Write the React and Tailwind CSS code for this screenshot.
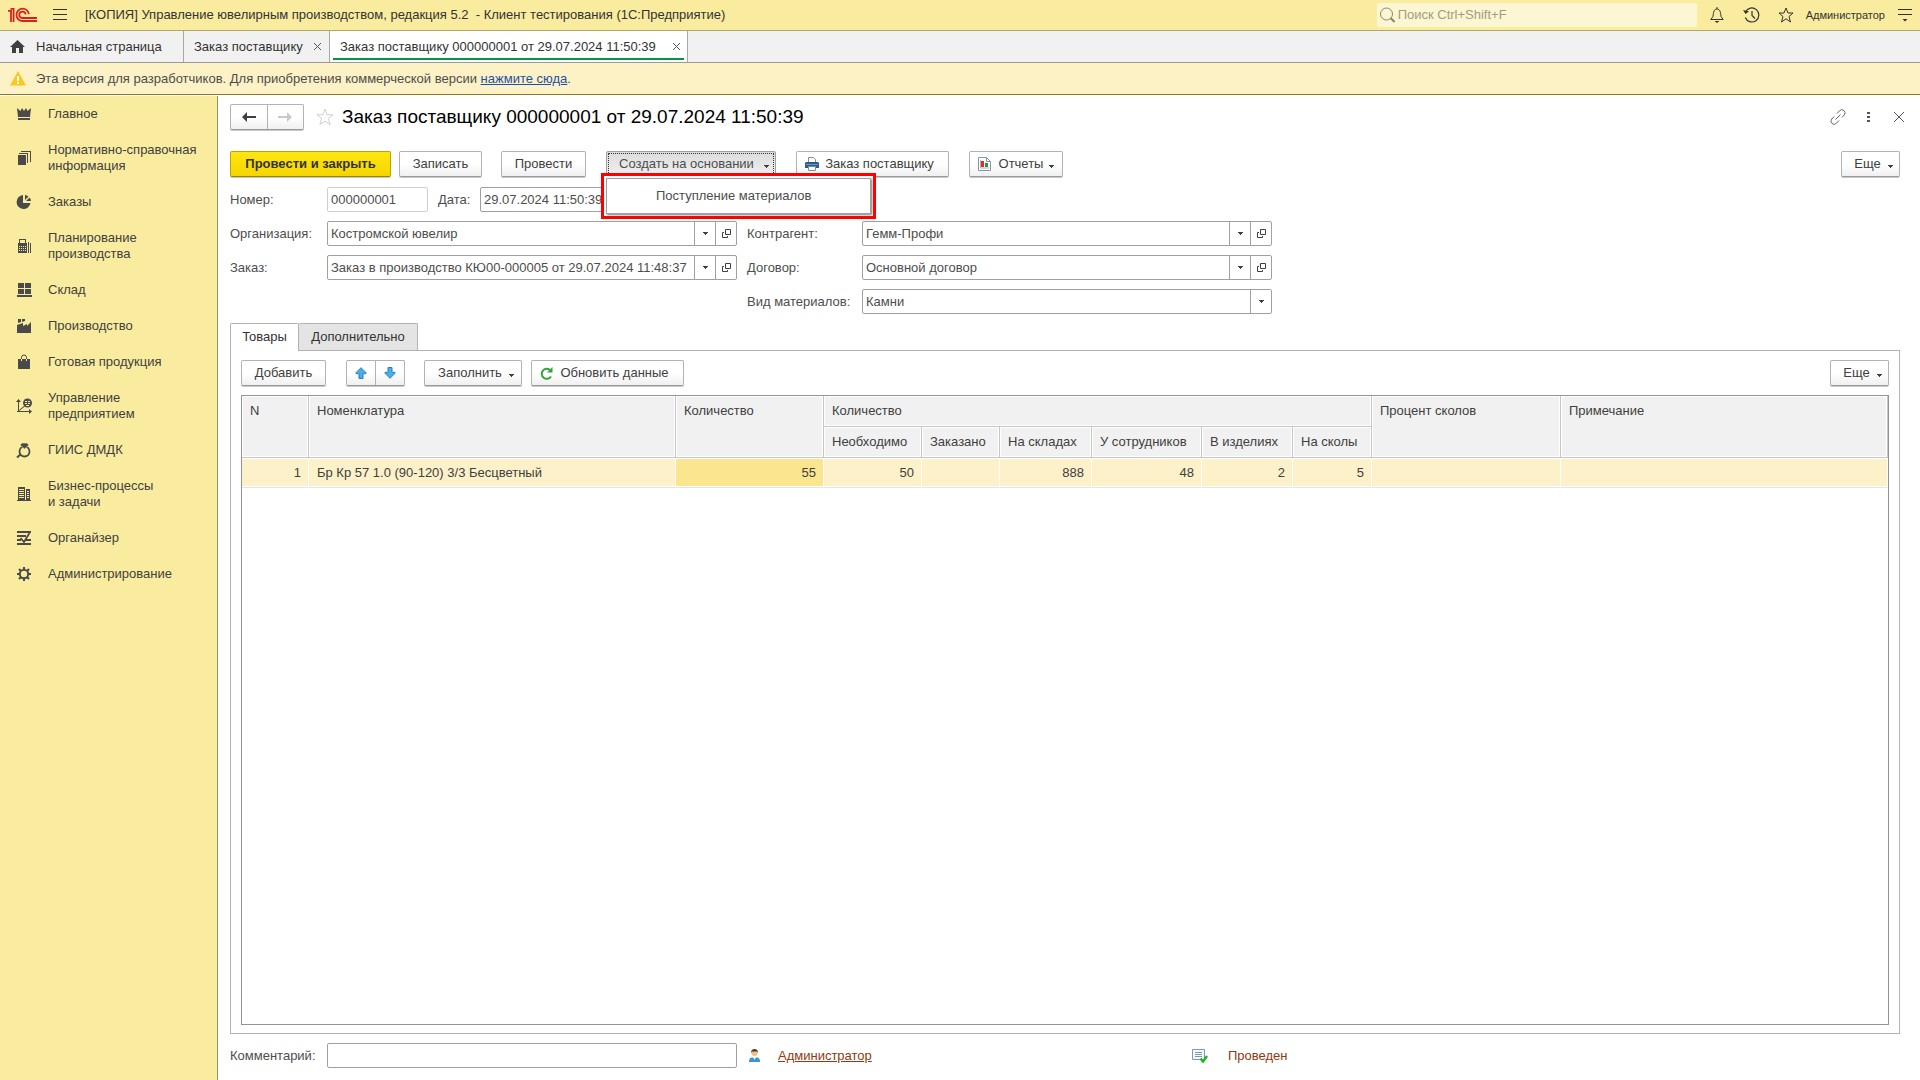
import React from "react";

const Caret = ({ className = "" }) => (
  <svg className={"shrink-0 " + className} width="5" height="3" viewBox="0 0 5 3" fill="#404040" aria-hidden="true">
    <path d="M0 0h5v1H4v1H3v1H2V2H1V1H0z" />
  </svg>
);

const BTN =
  "flex h-[26px] shrink-0 items-center justify-center rounded-[2px] border border-[#b2b2b2] border-b-[#9a9a9a] bg-gradient-to-b from-white from-50% to-[#f0f0f0] text-[#404040] shadow-[0_1px_0_#c8c8c8]";

function Icon({ children, size = 16 }) {
  return (
    <svg width={size} height={size} viewBox={`0 0 ${size} ${size}`} fill="#4a4a4a" className="shrink-0" aria-hidden="true">
      {children}
    </svg>
  );
}

const sections = [
  {
    label: ["Главное"],
    icon: <path d="M1 2l3.500 3L6 2l2 3 2-3 1.500 3L15 2l-1 9H2zM2 12h12v2H2z" />,
  },
  {
    label: ["Нормативно-справочная", "информация"],
    icon: <path d="M2 5h8v10H2zM3 3h9v10h-1V4H3zM5 1h10v11h-1V2H5z" />,
  },
  {
    label: ["Заказы"],
    icon: <path d="M7 1v8h7.500A7 7 0 1 1 7 1zM9 1a6.500 6.500 0 0 1 3.500 1.500L9 6zM10 7l3.500-3.500A6 6 0 0 1 15 7z" />,
  },
  {
    label: ["Планирование", "производства"],
    icon: (
      <>
        <path d="M3 1h7v4h1v10H2V5h1zM4 2v3h5V2zM12 4h1v11h-1zM14 5h1v10h-1z" fillRule="evenodd" />
        <path d="M3 8h1v1H3zM5 8h1v1H5zM7 8h1v1H7zM9 8h1v1H9zM3 10h1v1H3zM5 10h1v1H5zM7 10h1v1H7zM9 10h1v1H9zM3 12h1v1H3zM5 12h1v1H5zM7 12h1v1H7zM9 12h1v1H9z" fill="#faec9f" />
      </>
    ),
  },
  {
    label: ["Склад"],
    icon: <path d="M2 1h6v5H2zM9 1h6v5H9zM2 7h6v5H2zM9 7h6v5H9zM1 13h15v2H1z" />,
  },
  {
    label: ["Производство"],
    icon: <path d="M2 1h3v3l-3 1zM6 1h3v2L6 4zM1 7l6-2v3l4-2v2l4-4v11H1z" />,
  },
  {
    label: ["Готовая продукция"],
    icon: (
      <>
        <path d="M2 5h12v10H2z" />
        <path d="M5.500 5V3.500a2.500 2.500 0 0 1 5 0V5" fill="none" stroke="#4a4a4a" />
        <path d="M5.500 7V5M10.500 7V5" stroke="#faec9f" />
      </>
    ),
  },
  {
    label: ["Управление", "предприятием"],
    icon: (
      <>
        <path d="M2 4h1v10H2zM1 13h13v1H1zM0 4l2.500-3L5 4zM13 11l3 2.500-3 2.500zM3 12l5-4 .600 .800L3 13z" />
        <circle cx="11.500" cy="5" r="4.500" />
        <path d="M9 3h2v1H9zM12 3h2v1h-2zM9 5h2v1H9zM12 5h2v1h-2zM10 7h3v1h-3z" fill="#faec9f" />
      </>
    ),
  },
  {
    label: ["ГИИС ДМДК"],
    icon: (
      <>
        <circle cx="8.500" cy="9.500" r="5" fill="none" stroke="#4a4a4a" strokeWidth="1.800" />
        <path d="M6 1h5l2 2-4.500 4L4 3z" stroke="#faec9f" strokeWidth=".6" />
        <path d="M5 12l-4 3.500" stroke="#4a4a4a" strokeWidth="2" />
      </>
    ),
  },
  {
    label: ["Бизнес-процессы", "и задачи"],
    icon: (
      <path
        d="M2 1h7v13H2zM10 3h4v11h-4zM1 14h14v1H1zM3 3v1h5V3zM3 5v1h5V5zM3 7v1h5V7zM3 9v1h5V9zM3 11v1h5v-1zM11 5v1h2V5zM11 7v1h2V7zM11 9v1h2V9zM11 11v1h2v-1z"
        fillRule="evenodd"
      />
    ),
  },
  {
    label: ["Органайзер"],
    icon: (
      <>
        <path d="M1 1h14v2H1zM1 5h9v2H1zM1 9h4v2H1zM9 9h6v2H9zM1 13h14v2H1z" />
        <path d="M4.500 8l3.500 4 5.500-9" fill="none" stroke="#4a4a4a" strokeWidth="1.800" />
      </>
    ),
  },
  {
    label: ["Администрирование"],
    icon: (
      <>
        <circle cx="8" cy="8" r="4.200" fill="none" stroke="#4a4a4a" strokeWidth="2" />
        <path
          d="M8 1v3M8 12v3M1 8h3M12 8h3M3 3l2.200 2.200M10.800 10.800L13 13M3 13l2.200-2.200M10.800 5.200L13 3"
          stroke="#4a4a4a"
          strokeWidth="2"
        />
      </>
    ),
  },
];

function Logo() {
  return (
    <svg width="30" height="16" viewBox="0 0 30 16" fill="none" stroke="#d9201f" strokeWidth="1.800" role="img" aria-label="1С">
      <path d="M0 3.900h3V15M2.500 1.900h3.100V15" />
      <path d="M20.800 7.200A6.200 6.200 0 1 0 14.600 14H29" />
      <path d="M17.600 7.500A3.200 3.200 0 1 0 14.600 11H29" />
    </svg>
  );
}

function TopBar() {
  return (
    <header className="flex h-[31px] items-center border-b border-[#b3a86a] bg-[#faec9f] px-2">
      <Logo />
      <button type="button" aria-label="Меню" className="ml-[15px]">
        <svg width="14" height="12" viewBox="0 0 14 12" fill="#333">
          <path d="M0 0h14v1H0zM0 5h14v1H0zM0 10h14v1H0z" />
        </svg>
      </button>
      <h1 className="ml-[18px] flex-1 whitespace-pre text-[13px] text-[#333]">
        [КОПИЯ] Управление ювелирным производством, редакция 5.2{"  "}- Клиент тестирования (1С:Предприятие)
      </h1>
      <label className="flex h-6 w-[320px] items-center gap-[3px] rounded-[2px] bg-[#fdf6d3] pl-[3px]">
        <svg width="15" height="16" viewBox="0 0 15 16" fill="none" stroke="#8c8665" aria-hidden="true">
          <circle cx="6.500" cy="7" r="6" />
          <path d="M10.500 11l4 4" strokeWidth="2" />
        </svg>
        <input
          aria-label="Поиск"
          placeholder="Поиск Ctrl+Shift+F"
          className="min-w-0 flex-1 bg-transparent text-[13px] outline-none placeholder:text-[#a29c80]"
        />
      </label>
      <button type="button" aria-label="Уведомления" className="ml-[13px]">
        <svg width="14" height="16" viewBox="0 0 14 16" fill="none" stroke="#333">
          <path d="M7 0v2M3 9.500C3.500 5 4 2 7 2s3.500 3 4 7.500l2.200 3H.8z" />
          <path d="M4.500 14h5L7 16z" fill="#333" stroke="none" />
        </svg>
      </button>
      <button type="button" aria-label="История" className="ml-[19px]">
        <svg width="17" height="16" viewBox="0 0 17 16" fill="none" stroke="#333">
          <path d="M2.500 5A7 7 0 1 1 2.300 10.500" strokeWidth="1.200" />
          <path d="M0 3l2.500 4L6 4.500z" fill="#333" stroke="none" />
          <path d="M9 4v4.500l3 3" strokeWidth="1.200" />
        </svg>
      </button>
      <button type="button" aria-label="Избранное" className="ml-[18px]">
        <svg width="16" height="16" viewBox="0 0 16 16" fill="none" stroke="#333">
          <path d="M8 1l2 5h5l-4 3.500 1.500 5.500L8 11.800 3.500 15 5 9.500 1 6h5z" />
        </svg>
      </button>
      <span className="ml-3 text-[11px] text-[#333]">Администратор</span>
      <button type="button" aria-label="Сервис" className="ml-[13px]">
        <svg width="14" height="14" viewBox="0 0 14 14" fill="#333">
          <path d="M0 1h14v1H0zM0 6h14v1H0zM4.500 11h5L7 13.500z" />
        </svg>
      </button>
    </header>
  );
}

const CloseX = () => (
  <svg width="7" height="7" viewBox="0 0 7 7" stroke="#555" aria-hidden="true">
    <path d="M0 0l7 7M7 0L0 7" />
  </svg>
);

function WindowTabs() {
  return (
    <nav className="flex h-8 border-b border-[#9a9a9a] bg-[#f1f1f1] text-[13px] text-[#333]">
      <a href="#home" className="flex w-[184px] items-center gap-[11px] border-r border-[#a8a8a8] pl-[10px]">
        <svg width="15" height="13" viewBox="0 0 15 13" fill="#404040" aria-hidden="true">
          <path d="M7.500 0L15 7h-2v6H9V8H6v5H2V7H0z" />
        </svg>
        Начальная страница
      </a>
      <div className="flex w-[146px] items-center justify-between border-r border-[#a8a8a8] pl-[10px] pr-2">
        <a href="#orders">Заказ поставщику</a>
        <button type="button" aria-label="Закрыть вкладку">
          <CloseX />
        </button>
      </div>
      <div className="flex border-r border-[#a8a8a8] bg-white px-[3px] pb-[2px]">
        <div className="flex w-[351px] items-center justify-between border-b-2 border-[#009646] pl-[7px] pr-1 pt-1">
          <a href="#order">Заказ поставщику 000000001 от 29.07.2024 11:50:39</a>
          <button type="button" aria-label="Закрыть вкладку">
            <CloseX />
          </button>
        </div>
      </div>
    </nav>
  );
}

function Notice() {
  return (
    <div className="flex h-8 items-center border-b border-[#8f7c22] bg-[#fdf1c6] pl-[10px] text-[13px] text-[#4d4d4d]">
      <svg width="16" height="15" viewBox="0 0 16 15" aria-hidden="true">
        <path d="M8 0l8 14.500H0z" fill="#fbc81e" />
        <path d="M7 5h2v5H7zM7 11h2v2H7z" fill="#fff" />
      </svg>
      <p className="ml-[10px]">
        Эта версия для разработчиков. Для приобретения коммерческой версии{" "}
        <a href="#buy" className="text-[#1e50a8] underline">
          нажмите сюда
        </a>
        .
      </p>
    </div>
  );
}

function Sidebar() {
  return (
    <nav className="w-[218px] shrink-0 border-r border-[#9b9264] bg-[#faec9f] text-[13px] leading-4 text-[#404040]">
      {sections.map((s) => (
        <a key={s.label[0]} href="#section" className="flex items-center gap-4 py-[10px] pl-4">
          <Icon>{s.icon}</Icon>
          <span>
            {s.label.map((line) => (
              <span key={line} className="block whitespace-nowrap">
                {line}
              </span>
            ))}
          </span>
        </a>
      ))}
    </nav>
  );
}

function Field({ id, label, value, labelClass, open = true }) {
  return (
    <div className="flex items-center">
      <label htmlFor={id} className={"shrink-0 " + labelClass}>
        {label}
      </label>
      <div className="flex h-[25px] w-[410px] overflow-hidden rounded-[2px] border border-[#a0a0a0] bg-white">
        {open ? (
          <>
            <input id={id} defaultValue={value} className="min-w-0 flex-1 pl-[3px] outline-none" />
            <button type="button" aria-label={"Выбрать: " + label} className="flex w-[21px] items-center justify-center border-l border-[#a0a0a0]">
              <Caret />
            </button>
            <button type="button" aria-label={"Открыть: " + label} className="flex w-[21px] items-center justify-center border-l border-[#a0a0a0]">
              <svg width="9" height="9" viewBox="0 0 9 9" fill="none" stroke="#404040" aria-hidden="true">
                <path d="M3.500 .5h5v5h-5zM2 3.500H.5v5h5V7" />
              </svg>
            </button>
          </>
        ) : (
          <>
            <select id={id} defaultValue={value} className="min-w-0 flex-1 appearance-none pl-[3px] outline-none">
              <option>{value}</option>
            </select>
            <span className="flex w-[21px] items-center justify-center border-l border-[#a0a0a0]">
              <Caret />
            </span>
          </>
        )}
      </div>
    </div>
  );
}

function TitleRow() {
  return (
    <div className="flex items-center pt-2">
      <div className={BTN + " w-[74px]"}>
        <button type="button" aria-label="Назад" className="flex h-full flex-1 items-center justify-center border-r border-[#b2b2b2]">
          <svg width="14" height="10" viewBox="0 0 14 10" fill="#404040">
            <path d="M5 0v4h9v2H5v4L0 5z" />
          </svg>
        </button>
        <button type="button" aria-label="Вперед" className="flex h-full flex-1 items-center justify-center">
          <svg width="14" height="10" viewBox="0 0 14 10" fill="#c9c9c9">
            <path d="M9 0v4H0v2h9v4l5-5z" />
          </svg>
        </button>
      </div>
      <button type="button" aria-label="В избранное" className="ml-3">
        <svg width="18" height="18" viewBox="0 0 18 18" fill="none" stroke="#d0d0d0">
          <path d="M9 1l2.200 5.800H17l-4.700 3.700 1.800 6L9 13.200l-5.100 3.300 1.800-6L1 6.800h5.800z" />
        </svg>
      </button>
      <h2 className="ml-2 flex-1 text-[19px] leading-6 text-black">Заказ поставщику 000000001 от 29.07.2024 11:50:39</h2>
      <button type="button" aria-label="Ссылка">
        <svg width="16" height="16" viewBox="0 0 16 16" fill="none" stroke="#666">
          <path d="M7 4.500l2.500-2.700a3 3 0 0 1 4.700 4.200L12 8.500M9 11.500l-2.500 2.700A3 3 0 0 1 1.800 10L4 7.500M5.500 10.500l5-5" />
        </svg>
      </button>
      <button type="button" aria-label="Действия" className="ml-[21px]">
        <svg width="3" height="11" viewBox="0 0 3 11" fill="#555">
          <path d="M0 0h3v2H0zM0 4h3v2H0zM0 8h3v2H0z" />
        </svg>
      </button>
      <button type="button" aria-label="Закрыть" className="-mr-1 ml-6">
        <svg width="10" height="10" viewBox="0 0 10 10" stroke="#555">
          <path d="M0 0l10 10M10 0L0 10" />
        </svg>
      </button>
    </div>
  );
}

function CommandBar() {
  return (
    <div className="mt-[21px] flex">
      <button
        type="button"
        className="flex h-[26px] w-[161px] items-center justify-center rounded-[2px] border border-[#bda200] border-b-[#9c8600] bg-gradient-to-b from-[#ffe60f] to-[#f5d500] font-bold text-[#333] shadow-[0_1px_0_#c8c8c8]"
      >
        Провести и закрыть
      </button>
      <button type="button" className={BTN + " ml-2 w-[83px]"}>
        Записать
      </button>
      <button type="button" className={BTN + " ml-[19px] w-[85px]"}>
        Провести
      </button>
      <div className="relative ml-5 w-[170px]">
        <button
          type="button"
          aria-expanded="true"
          className="flex h-[26px] w-full rounded-[2px] border border-[#a0a0a0] bg-gradient-to-b from-[#dcdcdc] to-[#f0f0f0] p-px"
        >
          <span className="flex h-full w-full items-center justify-between border border-dotted border-[#333] pl-[10px] pr-1">
            Создать на основании
            <Caret className="mt-1" />
          </span>
        </button>
        <div className="absolute -left-[5px] top-[22px] z-10 w-[275px] border-[3px] border-[#fe0000] bg-white p-[2px]" role="menu">
          <button
            type="button"
            role="menuitem"
            className="flex h-9 w-full items-center justify-start border border-[#a0a0a0] pl-[49px] shadow-[1px_1px_2px_#777]"
          >
            Поступление материалов
          </button>
        </div>
      </div>
      <button type="button" className={BTN + " ml-5 w-[153px] gap-[6px] pr-[6px]"}>
        <svg width="14" height="14" viewBox="0 0 14 14" aria-hidden="true">
          <path d="M3.500 5V.5h5l2 2V5" fill="#fff" stroke="#7890a4" />
          <path d="M1 5h12l1 1v5H0V6z" fill="#2d5c86" />
          <path d="M1 7h12v1H1z" fill="#6d9cc0" />
          <path d="M3.500 9.500h7v4h-7z" fill="#fff" stroke="#7890a4" />
        </svg>
        Заказ поставщику
      </button>
      <button type="button" className={BTN + " ml-5 w-[94px]"}>
        <svg width="13" height="14" viewBox="0 0 13 14" aria-hidden="true">
          <path d="M.5 .5h8l4 4v9H.5z" fill="#fff" stroke="#8497a8" />
          <path d="M8.500 .5v4h4" fill="none" stroke="#8497a8" />
          <path d="M3 4h3v6H3z" fill="#e03020" />
          <path d="M7 6h3v4H7z" fill="#1f9a38" />
          <path d="M2.500 3v8H11" fill="none" stroke="#a7b4c0" />
        </svg>
        <span className="ml-2">Отчеты</span>
        <Caret className="ml-[6px] mt-1" />
      </button>
      <button type="button" className={BTN + " ml-auto w-[59px] gap-[7px] pl-[6px]"}>
        Еще
        <Caret className="mt-1" />
      </button>
    </div>
  );
}

function Form() {
  return (
    <div className="mt-[10px] space-y-[9px]">
      <div className="flex items-center">
        <label htmlFor="number" className="w-[97px]">
          Номер:
        </label>
        <input id="number" defaultValue="000000001" className="h-[25px] w-[101px] rounded-[2px] border border-[#cfcfcf] pl-[3px] outline-none" />
        <label htmlFor="date" className="ml-[10px] w-[42px]">
          Дата:
        </label>
        <input id="date" defaultValue="29.07.2024 11:50:39" className="h-[25px] w-[150px] rounded-[2px] border border-[#a0a0a0] pl-[3px] outline-none" />
      </div>
      <div className="flex gap-[10px]">
        <div className="space-y-[9px]">
          <Field id="org" label="Организация:" value="Костромской ювелир" labelClass="w-[97px]" />
          <Field id="order" label="Заказ:" value="Заказ в производство КЮ00-000005 от 29.07.2024 11:48:37" labelClass="w-[97px]" />
        </div>
        <div className="space-y-[9px]">
          <Field id="contractor" label="Контрагент:" value="Гемм-Профи" labelClass="w-[115px]" />
          <Field id="contract" label="Договор:" value="Основной договор" labelClass="w-[115px]" />
          <Field id="kind" label="Вид материалов:" value="Камни" labelClass="w-[115px]" open={false} />
        </div>
      </div>
    </div>
  );
}

const TH = "border-b border-r border-[#c6c6c6] bg-[#f1f1f1] px-2 pt-[7px] text-left align-top font-normal shadow-[inset_0_0_0_1px_#fff]";
const TD = "h-[30px] border-b border-r border-b-[#e4e4e4] border-r-white bg-[#fdf1c9] text-right shadow-[inset_0_1px_0_#fff,inset_0_-1px_0_#fff] px-[7px]";

function Goods() {
  return (
    <div className="min-h-0 flex-1 border border-[#949494] bg-white">
      <table className="w-full table-fixed border-separate border-spacing-0 leading-4 text-[#404040]">
        <colgroup>
          <col className="w-[67px]" />
          <col className="w-[367px]" />
          <col className="w-[148px]" />
          <col className="w-[98px]" />
          <col className="w-[78px]" />
          <col className="w-[92px]" />
          <col className="w-[110px]" />
          <col className="w-[91px]" />
          <col className="w-[79px]" />
          <col className="w-[189px]" />
          <col />
        </colgroup>
        <thead>
          <tr className="h-[31px]">
            <th rowSpan={2} className={TH}>N</th>
            <th rowSpan={2} className={TH}>Номенклатура</th>
            <th rowSpan={2} className={TH}>Количество</th>
            <th colSpan={6} className={TH}>Количество</th>
            <th rowSpan={2} className={TH}>Процент сколов</th>
            <th rowSpan={2} className={TH}>Примечание</th>
          </tr>
          <tr className="h-[31px]">
            {["Необходимо", "Заказано", "На складах", "У сотрудников", "В изделиях", "На сколы"].map((h) => (
              <th key={h} className={TH + " whitespace-nowrap"}>
                {h}
              </th>
            ))}
          </tr>
        </thead>
        <tbody>
          <tr>
            <td className={TD}>1</td>
            <td className={TD}>
              <span className="block pl-px text-left">Бр Кр 57 1.0 (90-120) 3/3 Бесцветный</span>
            </td>
            <td className="h-[30px] border-b border-r border-b-[#e4e4e4] border-r-white bg-[#fce58f] px-[7px] text-right shadow-[inset_0_1px_0_#fff,inset_0_-1px_0_#fff]">
              55
            </td>
            {["50", "", "888", "48", "2", "5", "", ""].map((v, i) => (
              <td key={i} className={TD}>
                {v}
              </td>
            ))}
          </tr>
        </tbody>
      </table>
    </div>
  );
}

function TabPanel() {
  return (
    <section className="mt-[9px] flex flex-1 flex-col">
      <div role="tablist" className="flex text-[#333]">
        <button type="button" role="tab" aria-selected="true" className="z-10 -mb-px h-7 w-[69px] rounded-t-[2px] border border-b-0 border-[#b2b2b2] bg-white pb-px">
          Товары
        </button>
        <button type="button" role="tab" aria-selected="false" className="h-[27px] w-[119px] rounded-t-[2px] border border-b-0 border-l-0 border-[#b2b2b2] bg-[#e4e4e4]">
          Дополнительно
        </button>
      </div>
      <div className="flex flex-1 flex-col border border-[#b2b2b2] px-[10px] pb-2 pt-[9px]">
        <div className="mb-[9px] flex">
          <button type="button" className={BTN + " w-[85px]"}>
            Добавить
          </button>
          <div className={BTN + " ml-5 w-[59px]"}>
            <button type="button" aria-label="Переместить вверх" className="flex h-full flex-1 items-center justify-center border-r border-[#b2b2b2]">
              <svg width="12" height="12" viewBox="0 0 12 12" fill="#45b0f0" stroke="#2f7fb4">
                <path d="M6 .7l5 5v1H8v4.800H4V6.700H1v-1z" />
              </svg>
            </button>
            <button type="button" aria-label="Переместить вниз" className="flex h-full flex-1 items-center justify-center">
              <svg width="12" height="12" viewBox="0 0 12 12" fill="#45b0f0" stroke="#2f7fb4">
                <path d="M6 11.300l5-5v-1H8V.5H4v4.800H1v1z" />
              </svg>
            </button>
          </div>
          <button type="button" className={BTN + " ml-[19px] w-[98px] gap-[7px] pl-[6px]"}>
            Заполнить
            <Caret className="mt-1" />
          </button>
          <button type="button" className={BTN + " ml-[9px] w-[153px] gap-[7px] pr-[6px]"}>
            <svg width="13" height="13" viewBox="0 0 13 13" fill="none" aria-hidden="true">
              <path d="M10.500 3.500A5 5 0 1 0 11 9.500" stroke="#2fa53c" strokeWidth="2" />
              <path d="M12.500 0v5.500H7z" fill="#2fa53c" />
            </svg>
            Обновить данные
          </button>
          <button type="button" className={BTN + " ml-auto w-[59px] gap-[7px] pl-[6px]"}>
            Еще
            <Caret className="mt-1" />
          </button>
        </div>
        <Goods />
      </div>
    </section>
  );
}

function Footer() {
  return (
    <footer className="flex items-center pb-3 pt-[9px]">
      <label htmlFor="comment" className="w-[97px]">
        Комментарий:
      </label>
      <input id="comment" className="h-[25px] w-[410px] rounded-[2px] border border-[#a0a0a0] px-[3px] outline-none" />
      <svg className="ml-3" width="11" height="14" viewBox="0 0 11 14" aria-hidden="true">
        <path d="M0 13c0-3 1-4.500 3-4.500h5c2 0 3 1.500 3 4.500z" fill="#3d93cf" />
        <circle cx="5.500" cy="4" r="3" fill="#f0c080" />
        <path d="M2 4C2 1 3.500 0 5.500 0S9 1 9 4L8 2.500H3z" fill="#4a3a28" />
        <path d="M4 8h3L5.500 11z" fill="#fff" />
      </svg>
      <a href="#author" className="ml-[18px] w-[414px] text-[#8f3a10]">
        <span className="underline">Администратор</span>
      </a>
      <svg width="16" height="14" viewBox="0 0 16 14" fill="none" aria-hidden="true">
        <path d="M.5 .5h12v10H.5z" fill="#f4f7fa" stroke="#8698a8" />
        <path d="M3 3.500h7M3 5.500h7M3 7.500h7" stroke="#8698a8" />
        <path d="M8.500 9.500l2.500 3 4-5.500" stroke="#28b02c" strokeWidth="2.500" />
      </svg>
      <span className="ml-[20px] text-[#8f3a10]">Проведен</span>
    </footer>
  );
}

export default function App() {
  return (
    <div className="flex min-h-screen flex-col bg-white font-['Liberation_Sans',Arial,sans-serif] text-[13px] text-[#4d4d4d]">
      <TopBar />
      <WindowTabs />
      <Notice />
      <div className="flex flex-1 pt-px">
        <Sidebar />
        <main className="flex min-w-0 flex-1 flex-col pl-3 pr-5">
          <TitleRow />
          <CommandBar />
          <Form />
          <TabPanel />
          <Footer />
        </main>
      </div>
    </div>
  );
}
